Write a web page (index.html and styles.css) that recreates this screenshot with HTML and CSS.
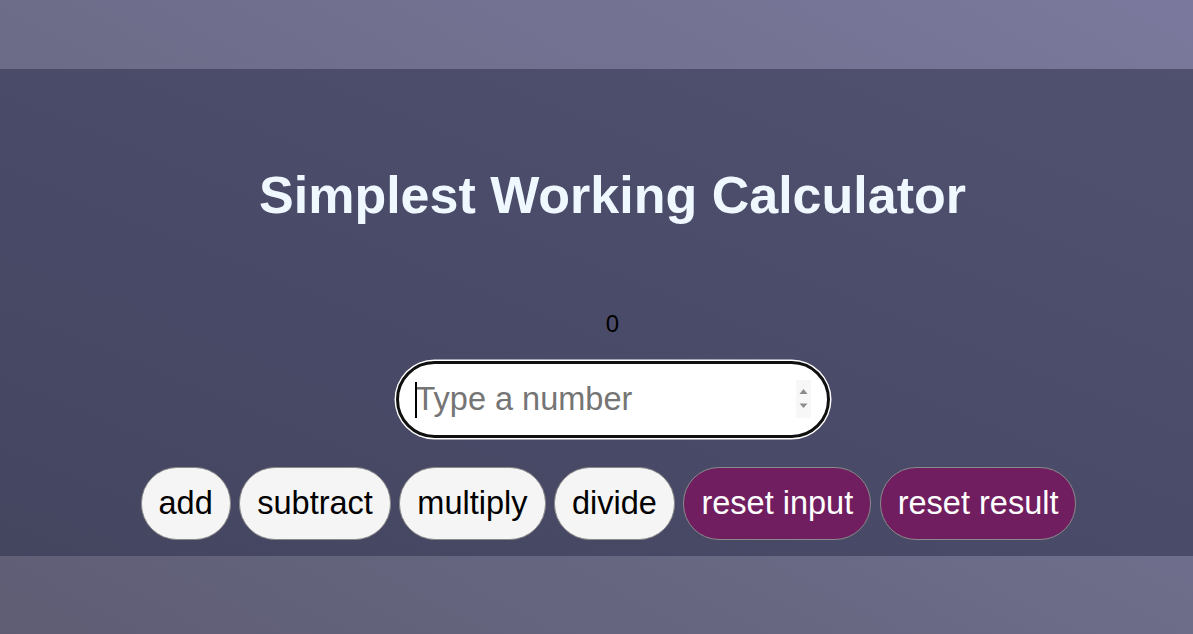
FILE: index.html
```html
<!DOCTYPE html>
<html lang="en">
<head>
<meta charset="utf-8">
<title>Simplest Working Calculator</title>
<link rel="stylesheet" href="styles.css">
</head>
<body>
<div class="page">
  <main class="band">
    <h1 class="title">Simplest Working Calculator</h1>
    <p class="result">0</p>
    <div class="field">
      <input class="number-input" type="text" placeholder="Type a number">
      <span class="caret"></span>
      <span class="spinner">
        <svg width="15" height="38" viewBox="0 0 15 38"><path d="M3.5 14 L7.5 9 L11.5 14 Z" fill="#8c8c8c"/><path d="M3.5 23.5 L7.5 28 L11.5 23.5 Z" fill="#8c8c8c"/></svg>
      </span>
    </div>
    <div class="buttons">
      <button class="btn">add</button>
      <button class="btn">subtract</button>
      <button class="btn">multiply</button>
      <button class="btn">divide</button>
      <button class="btn btn-reset">reset input</button>
      <button class="btn btn-reset">reset result</button>
    </div>
  </main>
</div>
</body>
</html>
```

FILE: styles.css
```css
html, body {
  margin: 0;
  padding: 0;
  height: 100%;
}

body {
  font-family: "Liberation Sans", Arial, sans-serif;
  background: linear-gradient(to top right, #5e5d74 0%, #6d6c89 50%, #7a799d 100%);
}

.page {
  min-height: 100%;
  padding-top: 69px;
  box-sizing: border-box;
}

.band {
  background: linear-gradient(to top right, #44455f 0%, #4a4b69 50%, #50516f 100%);
  padding: 96px 0 16px 32px;
  display: flex;
  flex-direction: column;
  align-items: center;
}

.title {
  margin: 0;
  font-size: 52px;
  line-height: 60px;
  font-weight: bold;
  color: #f0f8ff;
}

.result {
  margin: 85px 0 0;
  font-size: 24px;
  line-height: 27px;
  color: #000;
}

.field {
  position: relative;
  margin-top: 24px;
  width: 434px;
  height: 77px;
}

.number-input {
  box-sizing: border-box;
  width: 100%;
  height: 100%;
  border: 3px solid #101010;
  border-radius: 40px;
  box-shadow: 0 0 0 1.5px #ffffff;
  background: #fff;
  padding: 0 40px 0 17px;
  font-family: "Liberation Sans", Arial, sans-serif;
  font-size: 32.5px;
  color: #000;
  outline: none;
}

.number-input::placeholder {
  color: #757575;
}

.caret {
  position: absolute;
  left: 19px;
  top: 21px;
  width: 2px;
  height: 36px;
  background: #000;
}

.spinner {
  position: absolute;
  right: 19px;
  top: 19px;
  width: 15px;
  height: 38px;
  background: #f7f7f7;
}

.spinner svg {
  display: block;
}

.buttons {
  margin-top: 29px;
  display: flex;
  gap: 8.5px;
  margin-left: -8px;
}

.btn {
  font-family: "Liberation Sans", Arial, sans-serif;
  font-size: 32.5px;
  line-height: 37px;
  padding: 17px 17px;
  border: 1px solid #8a8a8a;
  border-radius: 36px;
  background: #f5f5f5;
  color: #000;
}

.btn-reset {
  background: #701e5f;
  color: #fff;
}
```
